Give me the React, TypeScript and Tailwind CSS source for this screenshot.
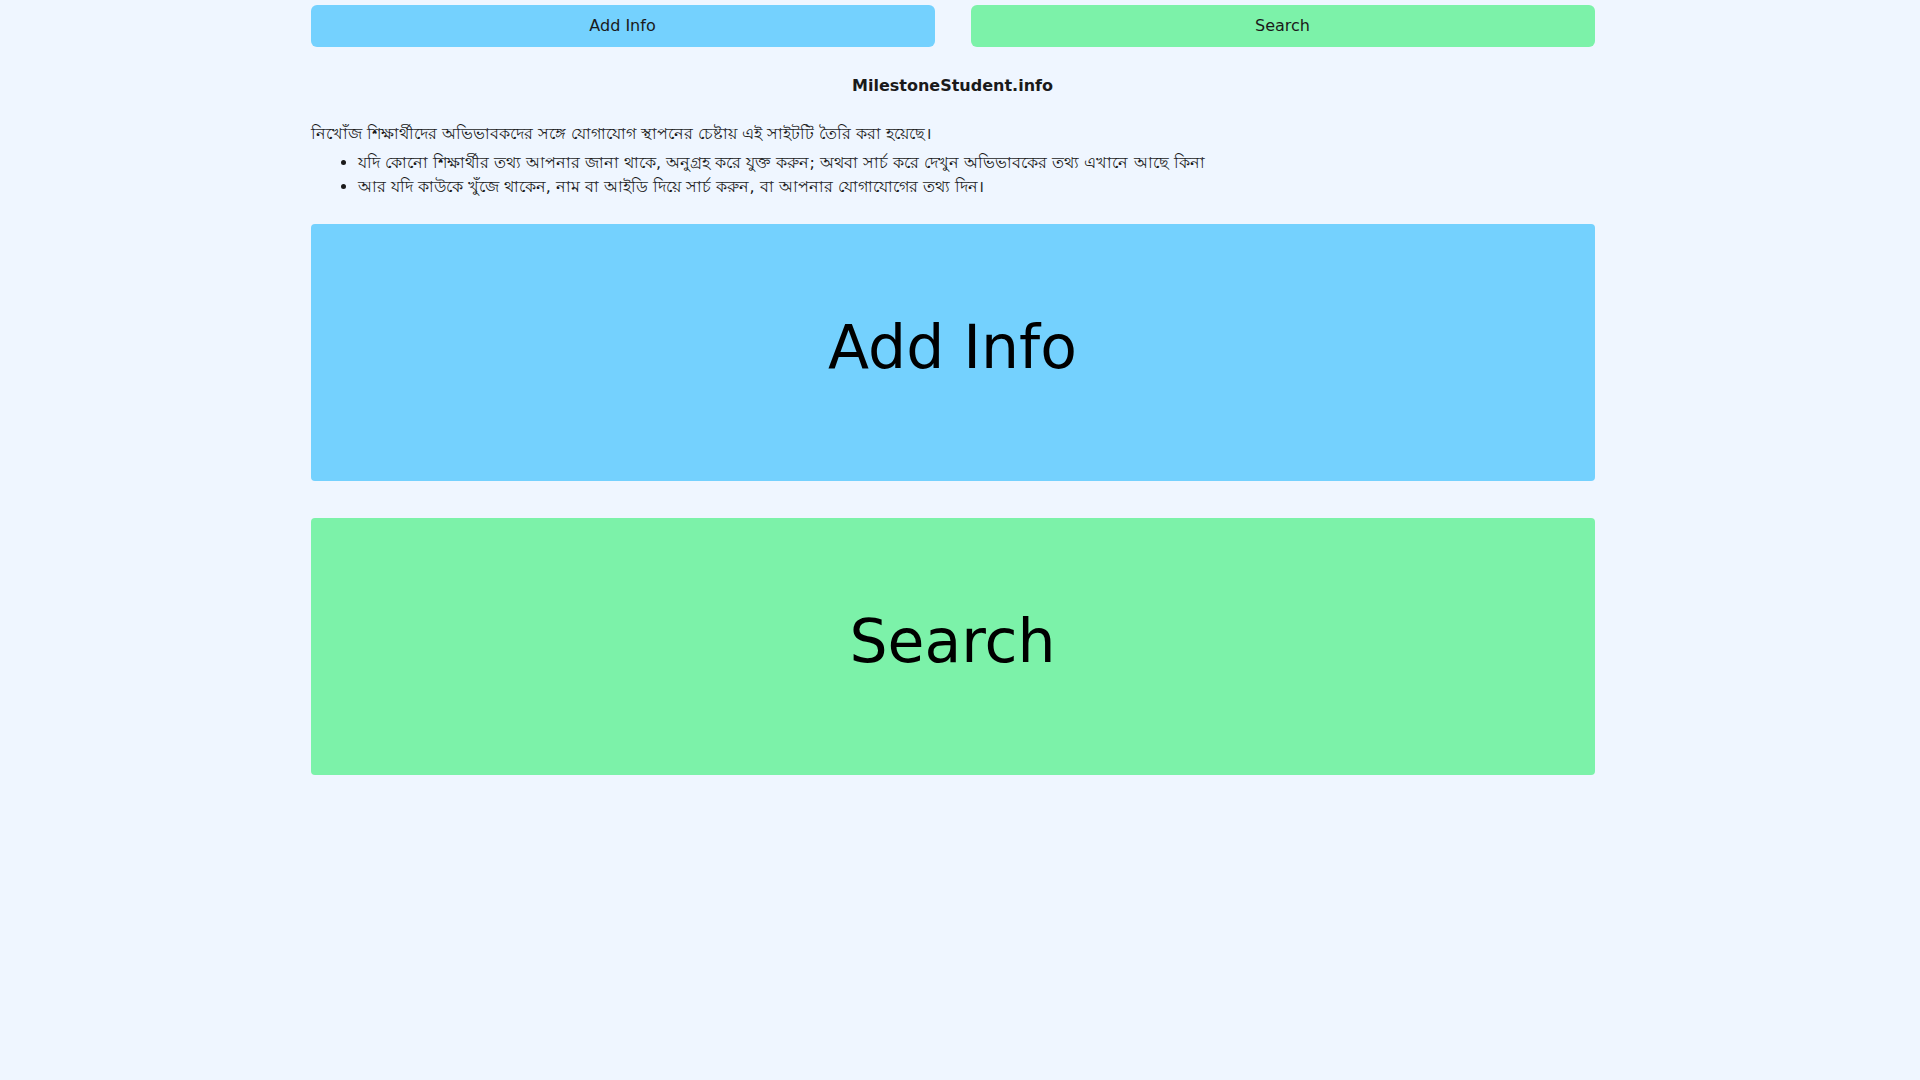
export default function App() {
  const font = { fontFamily: '"DejaVu Sans", "Noto Sans", sans-serif' };
  return (
    <div className="h-screen w-screen overflow-scroll bg-[#eff6ff] text-[#1a1a1a]" style={font}>
      <div className="w-[1920px] min-h-[2450px]">
        <div className="w-[1905px]">
          <div className="w-[1284px] mx-auto pt-[5px]">
            <div className="flex gap-[36px]">
              <button className="flex-1 h-[42px] rounded-md bg-[#74d1fe] text-base text-[#1a1a1a]">Add Info</button>
              <button className="flex-1 h-[42px] rounded-md bg-[#7cf2a9] text-base text-[#1a1a1a]">Search</button>
            </div>
            <h1 className="mt-[27px] text-center text-base leading-6 font-bold">MilestoneStudent.info</h1>
            <p className="mt-[24px] mb-[5px] text-base leading-6">নিখোঁজ শিক্ষার্থীদের অভিভাবকদের সঙ্গে যোগাযোগ স্থাপনের চেষ্টায় এই সাইটটি তৈরি করা হয়েছে।</p>
            <ul className="list-disc pl-[47px] text-base leading-6">
              <li>যদি কোনো শিক্ষার্থীর তথ্য আপনার জানা থাকে, অনুগ্রহ করে যুক্ত করুন; অথবা সার্চ করে দেখুন অভিভাবকের তথ্য এখানে আছে কিনা</li>
              <li>আর যদি কাউকে খুঁজে থাকেন, নাম বা আইডি দিয়ে সার্চ করুন, বা আপনার যোগাযোগের তথ্য দিন।</li>
            </ul>
            <div className="mt-[25px] h-[257px] rounded bg-[#74d1fe] flex items-center justify-center pb-[11px] text-6xl text-black">Add Info</div>
            <div className="mt-[37px] h-[257px] rounded bg-[#7cf2a9] flex items-center justify-center pb-[11px] text-6xl text-black">Search</div>
          </div>
        </div>
      </div>
    </div>
  );
}
